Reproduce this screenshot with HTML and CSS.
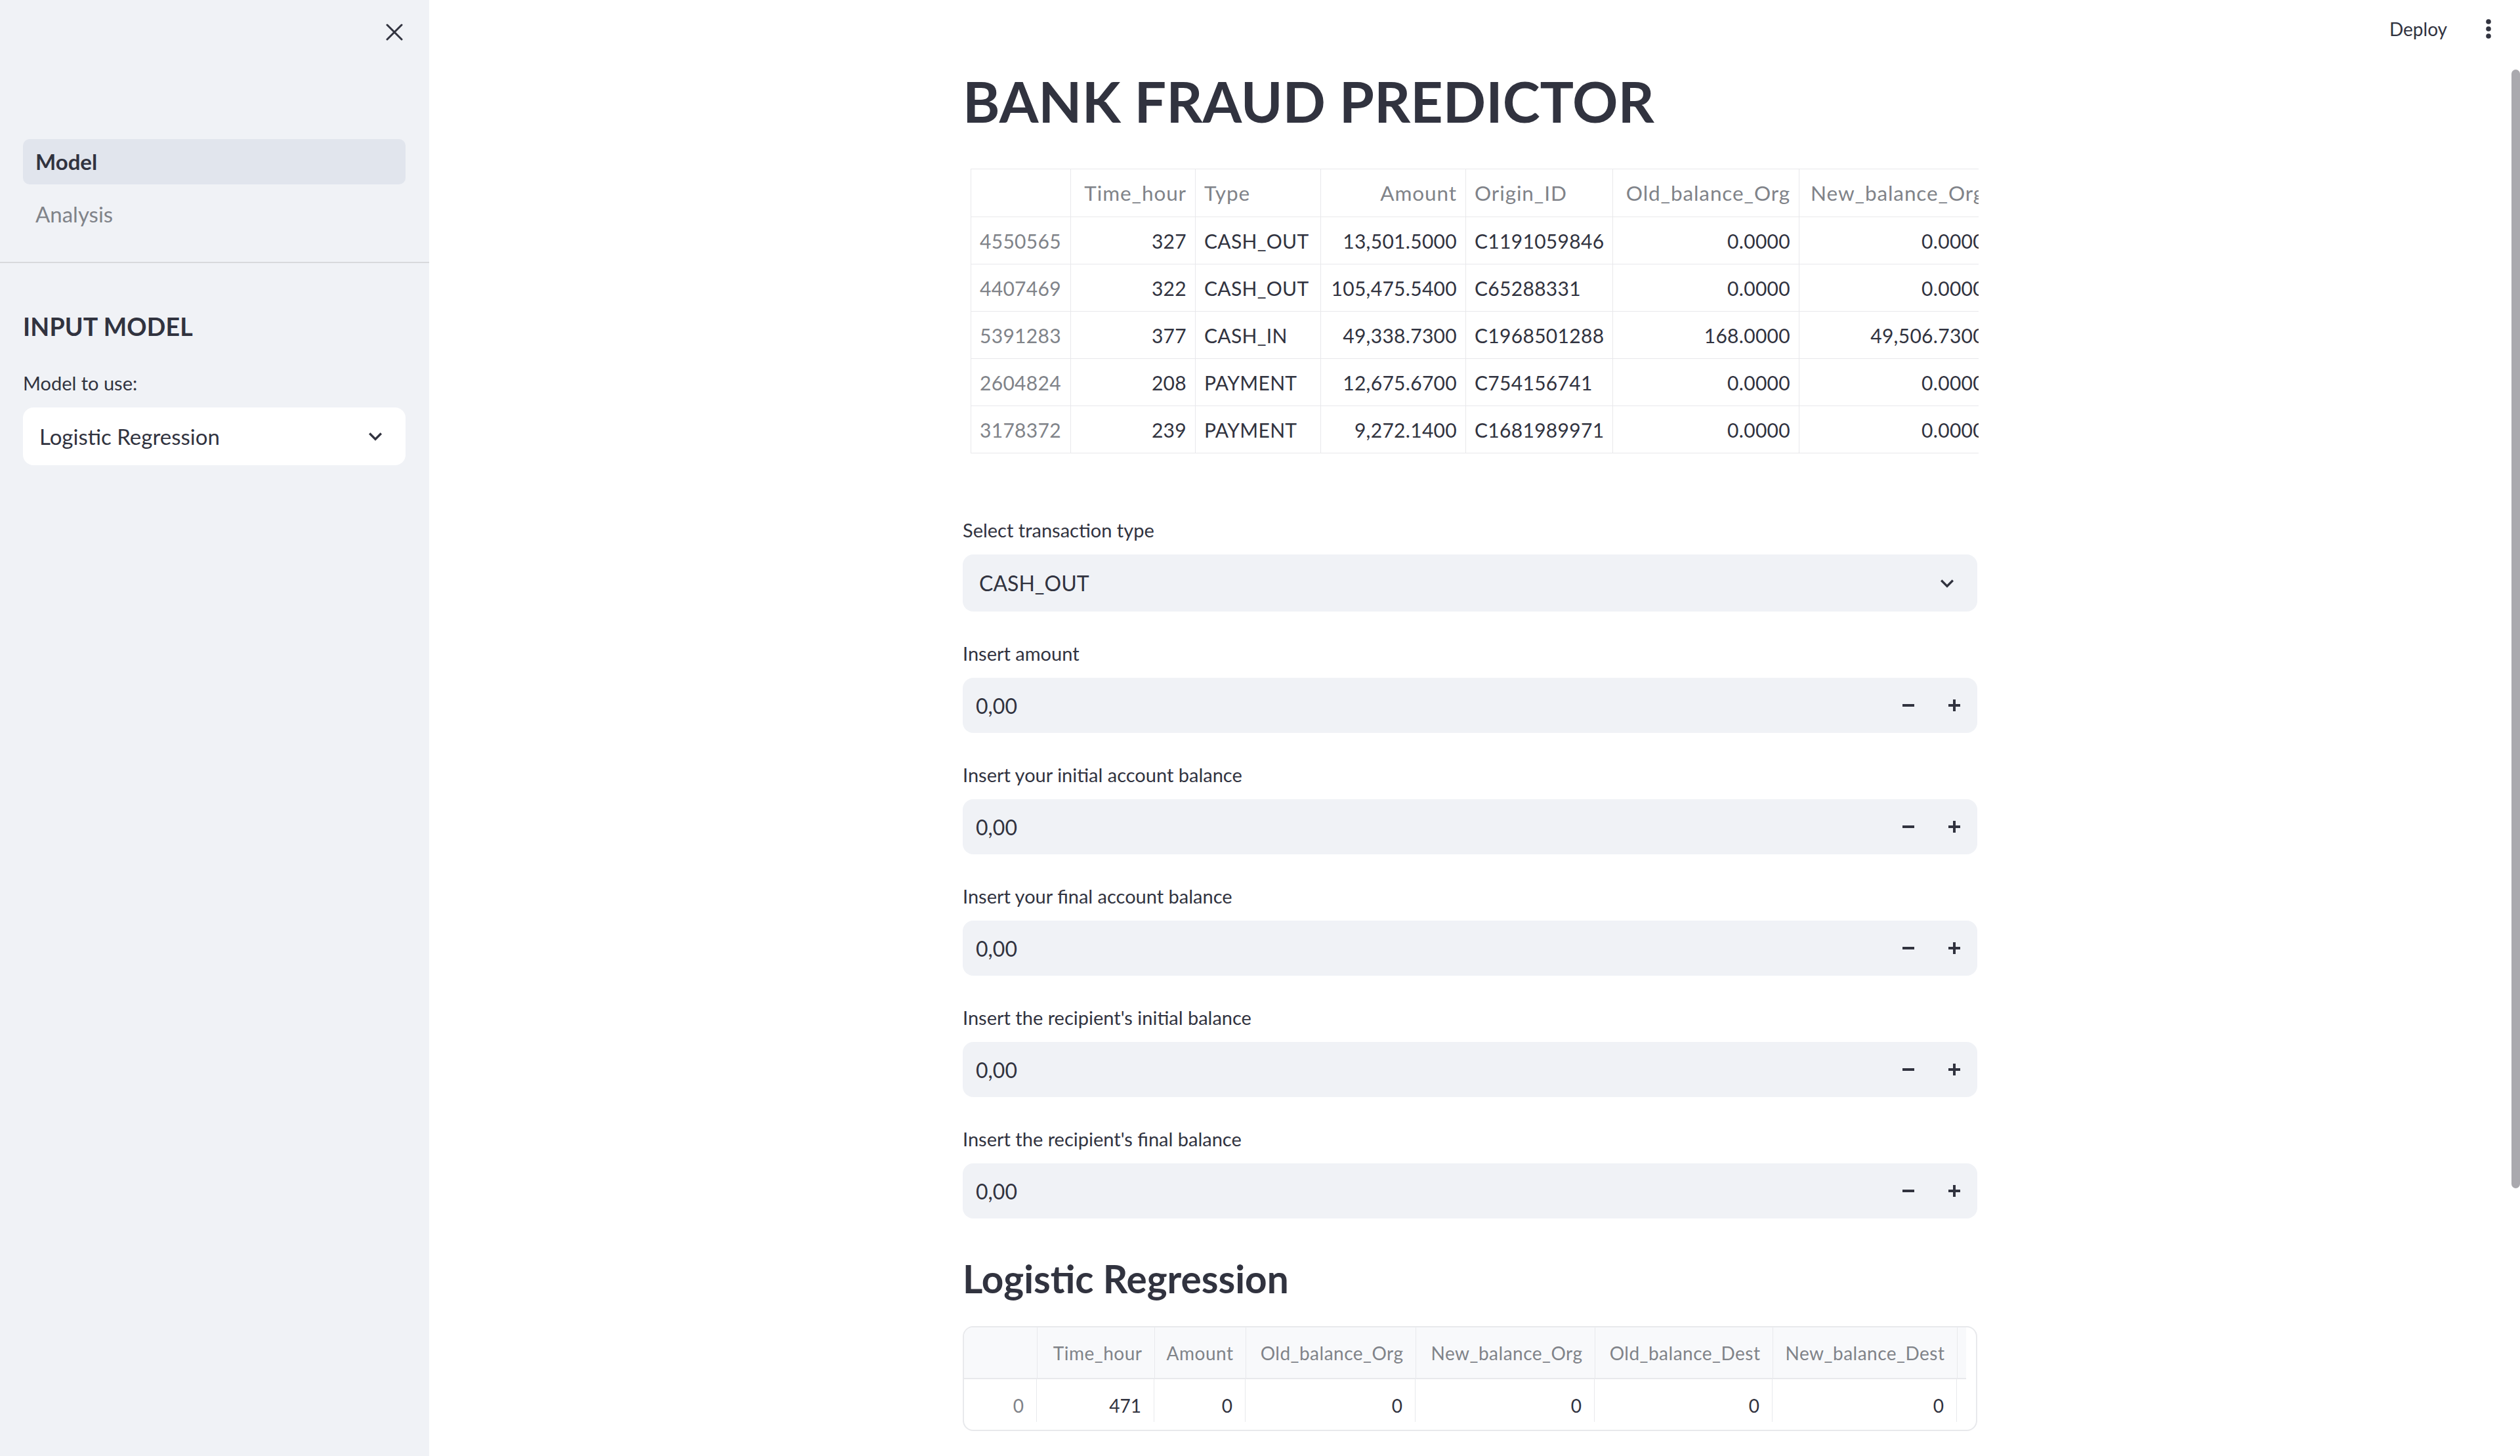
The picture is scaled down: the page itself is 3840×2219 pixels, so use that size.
FILE: index.html
```html
<!DOCTYPE html>
<html lang="en">
<head>
<meta charset="utf-8">
<title>Model</title>
<link rel="stylesheet" href="styles.css">
</head>
<body>
<div class="app">
  <aside class="sidebar">
    <div class="sb-top">
      <button class="close-btn" aria-label="Close sidebar">
        <svg width="26" height="26" viewBox="0 0 26 26"><path d="M2 2 L24 24 M24 2 L2 24" stroke="#31333f" stroke-width="3" stroke-linecap="round"/></svg>
      </button>
    </div>
    <nav class="nav">
      <a class="nav-item active">Model</a>
      <a class="nav-item">Analysis</a>
    </nav>
    <div class="sb-content">
      <h2 class="sb-title">INPUT MODEL</h2>
      <div class="field">
        <div class="label">Model to use:</div>
        <div class="select select-white">
          <span class="select-val">Logistic Regression</span>
          <svg class="chev" width="40" height="40" viewBox="0 0 24 24"><path d="M7.41 8.59 12 13.17l4.59-4.58L18 10l-6 6-6-6 1.41-1.41z" fill="#31333f"/></svg>
        </div>
      </div>
    </div>
  </aside>

  <main class="main">
    <header class="topbar">
      <span class="deploy">Deploy</span>
      <svg class="dots" width="10" height="32" viewBox="0 0 10 32"><circle cx="5" cy="5" r="3.8" fill="#31333f"/><circle cx="5" cy="16" r="3.8" fill="#31333f"/><circle cx="5" cy="27" r="3.8" fill="#31333f"/></svg>
    </header>

    <div class="block">
      <h1 class="title">BANK FRAUD PREDICTOR</h1>

      <div class="tbl-wrap">
        <table class="tbl1">
          <colgroup>
            <col class="w-idx"><col class="w-time"><col class="w-type"><col class="w-amt"><col class="w-orig"><col class="w-old"><col class="w-new">
          </colgroup>
          <thead>
            <tr><th></th><th class="r">Time_hour</th><th>Type</th><th class="r">Amount</th><th>Origin_ID</th><th class="r">Old_balance_Org</th><th class="r">New_balance_Org</th></tr>
          </thead>
          <tbody>
            <tr><td class="idx">4550565</td><td class="r">327</td><td>CASH_OUT</td><td class="r">13,501.5000</td><td>C1191059846</td><td class="r">0.0000</td><td class="r">0.0000</td></tr>
            <tr><td class="idx">4407469</td><td class="r">322</td><td>CASH_OUT</td><td class="r">105,475.5400</td><td>C65288331</td><td class="r">0.0000</td><td class="r">0.0000</td></tr>
            <tr><td class="idx">5391283</td><td class="r">377</td><td>CASH_IN</td><td class="r">49,338.7300</td><td>C1968501288</td><td class="r">168.0000</td><td class="r">49,506.7300</td></tr>
            <tr><td class="idx">2604824</td><td class="r">208</td><td>PAYMENT</td><td class="r">12,675.6700</td><td>C754156741</td><td class="r">0.0000</td><td class="r">0.0000</td></tr>
            <tr><td class="idx">3178372</td><td class="r">239</td><td>PAYMENT</td><td class="r">9,272.1400</td><td>C1681989971</td><td class="r">0.0000</td><td class="r">0.0000</td></tr>
          </tbody>
        </table>
      </div>

      <div class="form">
        <div class="field">
          <div class="label">Select transaction type</div>
          <div class="select select-grey">
            <span class="select-val">CASH_OUT</span>
            <svg class="chev" width="40" height="40" viewBox="0 0 24 24"><path d="M7.41 8.59 12 13.17l4.59-4.58L18 10l-6 6-6-6 1.41-1.41z" fill="#31333f"/></svg>
          </div>
        </div>
        <div class="field">
          <div class="label">Insert amount</div>
          <div class="numinput"><span class="num-val">0,00</span><span class="step"><svg width="20" height="20" viewBox="0 0 20 20"><rect x="1" y="8" width="18" height="4" fill="#31333f"/></svg></span><span class="step"><svg width="20" height="20" viewBox="0 0 20 20"><rect x="1" y="8" width="18" height="4" fill="#31333f"/><rect x="8" y="1" width="4" height="18" fill="#31333f"/></svg></span></div>
        </div>
        <div class="field">
          <div class="label">Insert your initial account balance</div>
          <div class="numinput"><span class="num-val">0,00</span><span class="step"><svg width="20" height="20" viewBox="0 0 20 20"><rect x="1" y="8" width="18" height="4" fill="#31333f"/></svg></span><span class="step"><svg width="20" height="20" viewBox="0 0 20 20"><rect x="1" y="8" width="18" height="4" fill="#31333f"/><rect x="8" y="1" width="4" height="18" fill="#31333f"/></svg></span></div>
        </div>
        <div class="field">
          <div class="label">Insert your final account balance</div>
          <div class="numinput"><span class="num-val">0,00</span><span class="step"><svg width="20" height="20" viewBox="0 0 20 20"><rect x="1" y="8" width="18" height="4" fill="#31333f"/></svg></span><span class="step"><svg width="20" height="20" viewBox="0 0 20 20"><rect x="1" y="8" width="18" height="4" fill="#31333f"/><rect x="8" y="1" width="4" height="18" fill="#31333f"/></svg></span></div>
        </div>
        <div class="field">
          <div class="label">Insert the recipient's initial balance</div>
          <div class="numinput"><span class="num-val">0,00</span><span class="step"><svg width="20" height="20" viewBox="0 0 20 20"><rect x="1" y="8" width="18" height="4" fill="#31333f"/></svg></span><span class="step"><svg width="20" height="20" viewBox="0 0 20 20"><rect x="1" y="8" width="18" height="4" fill="#31333f"/><rect x="8" y="1" width="4" height="18" fill="#31333f"/></svg></span></div>
        </div>
        <div class="field">
          <div class="label">Insert the recipient's final balance</div>
          <div class="numinput"><span class="num-val">0,00</span><span class="step"><svg width="20" height="20" viewBox="0 0 20 20"><rect x="1" y="8" width="18" height="4" fill="#31333f"/></svg></span><span class="step"><svg width="20" height="20" viewBox="0 0 20 20"><rect x="1" y="8" width="18" height="4" fill="#31333f"/><rect x="8" y="1" width="4" height="18" fill="#31333f"/></svg></span></div>
        </div>
      </div>

      <h2 class="subtitle">Logistic Regression</h2>

      <div class="df">
        <div class="df-clip">
          <table class="tbl2">
            <colgroup>
              <col class="c-idx"><col class="c-time"><col class="c-amt"><col class="c-obo"><col class="c-nbo"><col class="c-obd"><col class="c-nbd"><col class="c-next">
            </colgroup>
            <thead>
              <tr><th></th><th>Time_hour</th><th>Amount</th><th>Old_balance_Org</th><th>New_balance_Org</th><th>Old_balance_Dest</th><th>New_balance_Dest</th><th class="l">CASH_IN</th></tr>
            </thead>
            <tbody>
              <tr><td class="idx">0</td><td>471</td><td>0</td><td>0</td><td>0</td><td>0</td><td>0</td><td>0</td></tr>
            </tbody>
          </table>
        </div>
      </div>
    </div>
  </main>
  <div class="scroll-thumb"></div>
</div>
</body>
</html>
```

FILE: styles.css
```css
html, body {
  margin: 0;
  padding: 0;
  height: 100%;
  overflow: hidden;
  background: #ffffff;
}

body {
  font-family: "Lato", "Liberation Sans", sans-serif;
  color: #31333f;
}

.app {
  position: relative;
  display: flex;
  height: 100vh;
}

/* ---------- Sidebar ---------- */
.sidebar {
  width: 654px;
  flex: none;
  background: #f0f2f6;
  box-sizing: border-box;
}

.sb-top {
  height: 97px;
  display: flex;
  justify-content: flex-end;
  align-items: center;
  padding-right: 40px;
}

.close-btn {
  background: none;
  border: 0;
  padding: 0;
  width: 26px;
  height: 26px;
  display: flex;
}

.nav {
  margin-top: 115px;
  padding: 0 36px 38px 35px;
  display: flex;
  flex-direction: column;
  gap: 11px;
  border-bottom: 2px solid #d8d9dc;
}

.nav-item {
  display: block;
  height: 69px;
  line-height: 69px;
  padding-left: 19px;
  border-radius: 10px;
  font-size: 33px;
  color: #808389;
}

.nav-item.active {
  background: #e1e5ed;
  color: #31333f;
  font-weight: 700;
}

.sb-content {
  padding: 0 36px 0 35px;
}

.sb-title {
  margin: 73px 0 0;
  font-size: 37.5px;
  line-height: 47px;
  font-weight: 700;
  letter-spacing: 0.2px;
}

.sb-content .field {
  margin-top: 45px;
}

/* ---------- Shared field parts ---------- */
.label {
  font-size: 29px;
  line-height: 36px;
  margin-bottom: 19px;
}

.select {
  display: flex;
  align-items: center;
  height: 88px;
  border-radius: 16px;
  padding: 0 26px 0 25px;
  box-sizing: border-box;
}

.select-white {
  background: #ffffff;
}

.select-white .select-val {
  font-size: 33px;
}

.select-grey {
  background: #f0f2f6;
  height: 87px;
}

.select-val {
  flex: 1;
  font-size: 32px;
}

.chev {
  flex: none;
}

/* ---------- Main ---------- */
.main {
  position: relative;
  flex: 1;
  padding-right: 14px;
}

.topbar {
  position: absolute;
  top: 0;
  right: 0;
  height: 88px;
  display: flex;
  align-items: center;
  padding-right: 43px;
}

.deploy {
  font-size: 28px;
  margin-right: 58px;
}

.dots {
  display: block;
}

.block {
  width: 1546px;
  margin: 0 auto;
  padding-top: 102px;
}

.title {
  margin: 0;
  font-size: 86px;
  line-height: 104px;
  font-weight: 700;
}

/* ---------- Table 1 ---------- */
.tbl-wrap {
  margin: 51px 0 0 12px;
  width: 1536px;
  overflow: hidden;
}

.tbl1 {
  border-collapse: collapse;
  table-layout: fixed;
  width: 1558px;
  font-size: 30px;
}

.w-idx { width: 152px; }
.w-time { width: 190px; }
.w-type { width: 191px; }
.w-amt { width: 221px; }
.w-orig { width: 224px; }
.w-old { width: 284px; }
.w-new { width: 296px; }

.tbl1 th,
.tbl1 td {
  border: 1px solid #e8e8eb;
  height: 71px;
  padding: 0 13px;
  white-space: nowrap;
  text-align: left;
  vertical-align: middle;
  overflow: hidden;
  letter-spacing: 0.3px;
}

.tbl1 th {
  font-weight: 400;
  font-size: 31.5px;
  letter-spacing: 0.9px;
  color: #808389;
  height: 72px;
}

.tbl1 .r {
  text-align: right;
}

.tbl1 .idx {
  color: #808389;
}

/* ---------- Form ---------- */
.form {
  margin-top: 99px;
  display: flex;
  flex-direction: column;
  gap: 46px;
}

.numinput {
  display: flex;
  align-items: center;
  height: 84px;
  background: #f0f2f6;
  border-radius: 16px;
}

.num-val {
  flex: 1;
  padding-left: 20px;
  font-size: 32px;
}

.step {
  width: 70px;
  height: 100%;
  display: flex;
  align-items: center;
  justify-content: center;
}

.subtitle {
  margin: 58px 0 0;
  font-size: 58.5px;
  line-height: 67px;
  font-weight: 700;
}

/* ---------- Dataframe 2 ---------- */
.df {
  margin-top: 39px;
  border: 2px solid #e8e9ec;
  border-radius: 16px;
  overflow: hidden;
  box-sizing: border-box;
  height: 160px;
}

.df-clip {
  width: calc(100% - 15px);
  overflow: hidden;
}

.tbl2 {
  border-collapse: collapse;
  table-layout: fixed;
  width: 1713px;
  font-size: 28px;
}

.c-idx { width: 111px; }
.c-time { width: 179px; }
.c-amt { width: 139px; }
.c-obo { width: 259px; }
.c-nbo { width: 273px; }
.c-obd { width: 271px; }
.c-nbd { width: 281px; }
.c-next { width: 200px; }

.tbl2 th {
  background: #f8f9fb;
  height: 77px;
  padding: 0 18px 0 16px;
  font-weight: 400;
  letter-spacing: 0.5px;
  color: #808389;
  text-align: right;
  white-space: nowrap;
  border-right: 1px solid #e8e9ec;
  border-bottom: 2px solid #e8e9ec;
}

.tbl2 th.l {
  text-align: left;
}

.tbl2 td {
  height: 79px;
  padding: 0 20px 0 16px;
  text-align: right;
  white-space: nowrap;
  background: linear-gradient(#e8e9ec, #e8e9ec) right top / 1px 65px no-repeat;
}

.tbl2 .idx {
  color: #808389;
}

/* ---------- Scroll thumb overlay ---------- */
.scroll-thumb {
  position: absolute;
  right: 0;
  top: 106px;
  width: 13px;
  height: 1705px;
  background: #aaa9ae;
  border-radius: 7px;
}
```
